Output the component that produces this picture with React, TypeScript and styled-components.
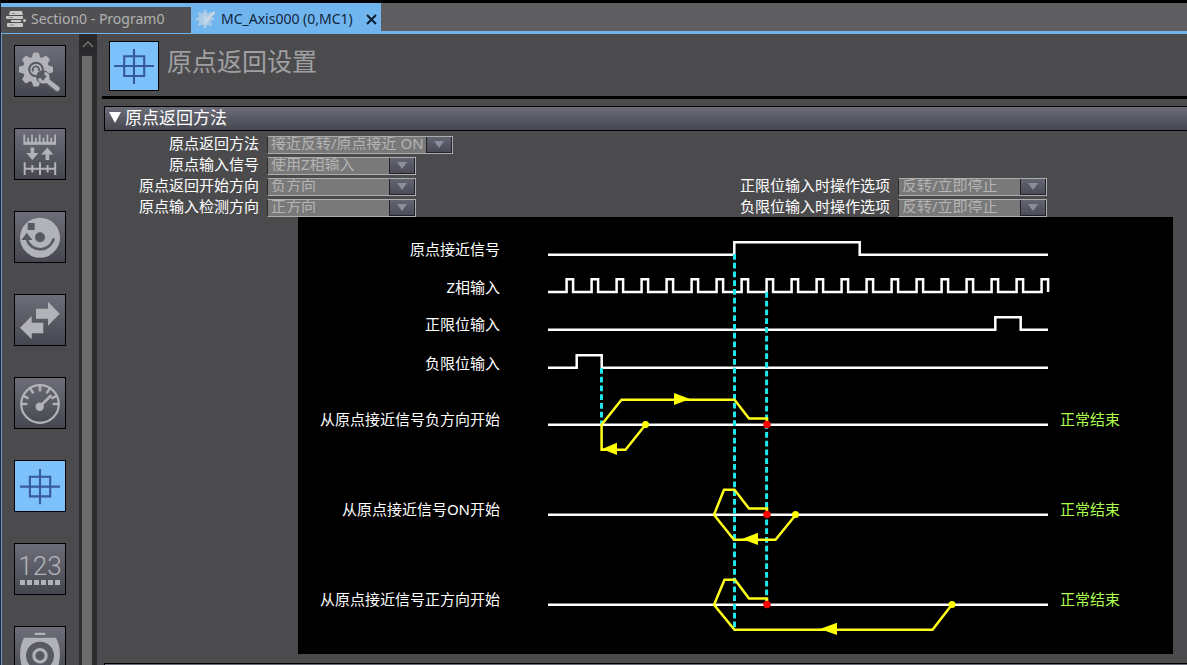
import React from "react";
import styled, { createGlobalStyle, css } from "styled-components";

const UI_FONT = `"Noto Sans", "Noto Sans CJK SC", sans-serif`;

const GlobalStyle = createGlobalStyle`
  * { box-sizing: border-box; }
  html, body { margin: 0; padding: 0; }
  body { background: #4b4b4e; font-family: ${UI_FONT}; font-size: 15px; color: #fff; }
`;

const Window = styled.div`
  display: flex;
  flex-direction: column;
  height: 100vh;
  overflow: hidden;
  border-top: 3px solid #000;
  border-left: 1px solid #1c2430;
  background: #4b4b4e;
`;

const TabBar = styled.nav`
  display: flex;
  flex: none;
  height: 31px;
  background: #5e5e60;
  border-bottom: 3px solid #71b5ef;
`;

const Tab = styled.div<{ $active?: boolean }>`
  display: flex;
  align-items: center;
  flex: none;
  width: 190px;
  height: 31px;
  padding-left: 4px;
  background: #505053;
  border-top: 4px solid #71b5ef;
  border-bottom: 1px solid #71b5ef;
  ${(p) =>
    p.$active &&
    css`
      background: #71b5ef;
    `}
`;

const tabButton = css`
  border: 0;
  padding: 0;
  background: none;
  font-family: ${UI_FONT};
  cursor: pointer;
`;

const TabButton = styled.button<{ $active?: boolean }>`
  ${tabButton}
  display: flex;
  align-items: center;
  gap: 4px;
  margin-bottom: 3px;
  font-size: 14px;
  line-height: 20px;
  white-space: nowrap;
  color: ${(p) => (p.$active ? "#10263c" : "#b0b0b1")};
`;

const CloseButton = styled.button`
  ${tabButton}
  display: flex;
  margin-left: auto;
  margin-right: 4px;
  margin-bottom: 2px;
`;

const Workspace = styled.div`
  display: flex;
  flex: 1;
  min-height: 0;
  border-left: 1px solid #6d9cc9;
`;

const Sidebar = styled.aside`
  display: flex;
  flex-direction: column;
  flex: none;
  gap: 31px;
  width: 77px;
  padding: 11px 0 0 12px;
  overflow: hidden;
`;

const IconButton = styled.button<{ $selected?: boolean }>`
  display: block;
  flex: none;
  width: 52px;
  height: 52px;
  padding: 0;
  border: 1px solid #000;
  background: ${(p) => (p.$selected ? "#7cc1fc" : "linear-gradient(#6d6e79, #45464f)")};
  cursor: pointer;
`;

const ScrollTrack = styled.div`
  display: flex;
  flex-direction: column;
  align-items: stretch;
  flex: none;
  width: 18px;
  padding-top: 1px;
  background: #2c2c2e;
`;

const ScrollUp = styled.button`
  display: flex;
  align-items: center;
  justify-content: center;
  height: 18px;
  padding: 0;
  border: 0;
  background: #29292b;
`;

const ScrollThumb = styled.div`
  flex: 1;
  margin: 3px 5px 0 3px;
  background: #6c6c6d;
`;

const Main = styled.main`
  flex: 1;
  min-width: 0;
  padding-left: 5px;
  overflow: hidden;
`;

const PageHeader = styled.header`
  display: flex;
  align-items: flex-start;
  gap: 8px;
  height: 65px;
  padding: 7px 0 0 7px;
  border-bottom: 3px solid #000;
`;

const PageIcon = styled.div`
  width: 50px;
  height: 50px;
  border: 1px solid #000;
  background: #7cc1fc;
`;

const PageTitle = styled.h1`
  margin: 0;
  font-size: 25px;
  line-height: 40px;
  font-weight: 400;
  color: #a0a0a2;
`;

const Section = styled.section`
  margin: 7px 0 0 2px;
`;

const SectionBar = styled.button`
  display: flex;
  align-items: center;
  gap: 4px;
  width: 100%;
  height: 25px;
  padding: 0 0 2px 4px;
  border: 1px solid #000;
  border-right: 0;
  background: linear-gradient(#6c6d78, #464750);
  font-family: ${UI_FONT};
  font-size: 17px;
  line-height: 20px;
  color: #fff;
  text-align: left;
`;

const Settings = styled.div`
  display: grid;
  grid-template-columns: 155px 460px 155px auto;
  column-gap: 8px;
  row-gap: 3px;
  padding: 5px 0 0;
`;

const FieldLabel = styled.label<{ $second?: boolean }>`
  grid-column: ${(p) => (p.$second ? 3 : 1)};
  height: 18px;
  line-height: 15px;
  text-align: right;
  white-space: nowrap;
`;

const SelectFrame = styled.div<{ $wide?: boolean; $second?: boolean }>`
  display: flex;
  grid-column: ${(p) => (p.$second ? 4 : 2)};
  position: relative;
  width: ${(p) => (p.$wide ? 186 : 149)}px;
  height: 18px;
  border: 1px solid #adadad;
  border-left: 1px solid #2a2a2a;
  background: #797979;
`;

const Select = styled.select`
  appearance: none;
  width: 100%;
  height: 16px;
  padding: 0 26px 3px 3px;
  border: 0;
  background: transparent;
  font-family: ${UI_FONT};
  font-size: 15px;
  line-height: 13px;
  color: #b4b4b4;
  opacity: 1;
`;

const SelectArrow = styled.span`
  display: flex;
  align-items: center;
  justify-content: center;
  position: absolute;
  top: 0;
  right: 0;
  width: 26px;
  height: 16px;
  border: 1px solid #22222a;
  border-top: 0;
  background: linear-gradient(#646572, #4b4c58);
  pointer-events: none;
`;

const Diagram = styled.figure`
  margin: 0 14px 0 194px;
  background: #000;

  svg {
    display: block;
    width: 100%;
    height: auto;
  }

  text {
    font-family: ${UI_FONT};
    font-size: 15px;
    fill: #fff;
  }

  text.result {
    fill: #adff4f;
  }
`;

const NextSection = styled(Section)`
  margin-top: 9px;
`;

const LIGHT = "#b2b3b8";
const DARK = "#585963";

const Icon = ({ children }: { children: React.ReactNode }) => (
  <svg width="50" height="50" viewBox="0 0 50 50" fill="none" aria-hidden="true" display="block">
    {children}
  </svg>
);

const teeth = [0, 45, 90, 135, 180, 225, 270, 315];

const GearWrenchIcon = () => (
  <Icon>
    <circle cx="21" cy="23.5" r="13" fill={LIGHT} />
    {teeth.map((a) => (
      <path
        key={a}
        d="M17 12.5 L18.6 7 H23.4 L25 12.5 Z"
        fill={LIGHT}
        stroke={LIGHT}
        strokeLinejoin="round"
        transform={`rotate(${a} 21 23.5)`}
      />
    ))}
    <circle cx="21" cy="23.5" r="6.8" stroke={DARK} strokeWidth="2" />
    <path d="M18.2 25.4 A3.2 3.2 0 1 1 23.6 25.2" stroke={DARK} strokeWidth="1.6" />
    <path d="M28.5 31.5 L42 42.5" stroke={DARK} strokeWidth="8" strokeLinecap="round" />
    <circle cx="28" cy="31" r="6.8" fill={DARK} />
    <path d="M31.5 34 L42.3 42.6" stroke={LIGHT} strokeWidth="4.6" strokeLinecap="round" />
    <path d="M29.6 27.2 A4.4 4.4 0 1 1 24.4 32.4" stroke={LIGHT} strokeWidth="3" />
    <path d="M29 33.500 L32 30.500 L35 35 L32.500 37 Z" fill={LIGHT} />
  </Icon>
);

const RulerIcon = () => (
  <Icon>
    <rect x="8.4" y="12.8" width="32.6" height="3" fill={LIGHT} />
    {[0, 1, 2, 3, 4, 5, 6, 7, 8].map((i) => (
      <rect key={i} x={8.4 + i * 3.85} y={i % 2 ? 8.6 : 5.6} width="1.8" height={i % 2 ? 5 : 8} fill={LIGHT} />
    ))}
    <path d="M15.6 18.5 H19.2 V24 H23.4 L17.4 31 L11.2 24 H15.6 Z" fill={LIGHT} />
    <path d="M30.6 31 H34.2 V25.5 H38.4 L32.4 18.5 L26.2 25.5 H30.6 Z" fill={LIGHT} />
    <path d="M9 39.7 H41 M9.7 33.2 V46 M25 33.2 V46 M40.2 33.2 V46 M17.3 36 V43.4 M32.6 36 V43.4" stroke={LIGHT} strokeWidth="2" />
  </Icon>
);

const RotaryIcon = () => (
  <Icon>
    <circle cx="25" cy="25.7" r="20" fill={LIGHT} />
    <circle cx="25" cy="25.3" r="5" fill={DARK} />
    <rect x="12.7" y="11" width="7" height="7" fill={DARK} />
    <path d="M38.8 26.5 A14 14 0 0 1 12 28" stroke={DARK} strokeWidth="2.6" />
    <path d="M6.4 28 L11.7 20.7 L17.4 28 Z" fill={DARK} />
  </Icon>
);

const TransferIcon = () => (
  <Icon>
    <path d="M21 13.7 H33 V6.7 L44.7 18.7 L33 30.7 V23.7 H21 Z" fill={LIGHT} />
    <path d="M28.3 27.7 V38.3 H16.7 V44.3 L5 32.7 L16.7 21 V27.7 Z" fill={LIGHT} />
  </Icon>
);

const GaugeIcon = () => (
  <Icon>
    <circle cx="25" cy="26" r="18.8" stroke={LIGHT} strokeWidth="2.2" />
    {[-90, -64, -32, 0, 32, 64, 90].map((a) => (
      <path key={a} d="M25 8 V13.4" stroke={LIGHT} strokeWidth="2.4" transform={`rotate(${a} 25 26)`} />
    ))}
    <circle cx="24.7" cy="28.7" r="4.2" fill={LIGHT} />
    <path d="M24.7 28.7 L35.5 18" stroke={LIGHT} strokeWidth="2.6" strokeLinecap="round" />
  </Icon>
);

const HomingIcon = () => (
  <Icon>
    <path d="M14.9 15.7 H35.2 V35.4 H14.9 Z M25 8 V43.3 M5 25.6 H45" stroke="#365a9d" strokeWidth="2.1" />
  </Icon>
);

const CounterText = styled.text`
  font-family: Roboto, "Liberation Sans", sans-serif;
  font-size: 26px;
  font-weight: 300;
  fill: ${LIGHT};
`;

const CounterIcon = () => (
  <Icon>
    <CounterText x="25" y="31" textAnchor="middle">
      123
    </CounterText>
    {[0, 1, 2, 3, 4, 5].map((i) => (
      <rect key={i} x={5 + i * 7} y="36" width="5" height="5" fill={LIGHT} />
    ))}
  </Icon>
);

const MotorIcon = () => (
  <Icon>
    <rect x="19.7" y="5.8" width="10.6" height="2.2" fill={LIGHT} />
    <path d="M9 10.7 H41 C46 20 46.500 32 41 46 H9 C3.500 32 4 20 9 10.700 Z" fill={LIGHT} />
    <circle cx="25" cy="28.700" r="14" fill={DARK} />
    <circle cx="25" cy="28.700" r="6.200" stroke={LIGHT} strokeWidth="3" />
  </Icon>
);

const ProgramIcon = () => (
  <svg width="22" height="20" viewBox="0 0 22 20" aria-hidden="true">
    <g fill="#c8c8c8">
      <path d="M5 2 H17 L18 6 H4 Z" />
      <rect x="1" y="7" width="17" height="3" rx="1" />
      <rect x="6" y="11" width="10" height="2" />
      <rect x="2" y="14" width="16" height="4" rx="1" />
      <circle cx="19.500" cy="11.500" r="1.500" />
    </g>
    <path d="M7 4.500 H10 M4 8.500 H8 M5 16 H9" stroke="#8b8b8d" />
  </svg>
);

const AxisIcon = () => (
  <svg width="22" height="20" viewBox="0 0 22 20" aria-hidden="true">
    <g fill="#a9cbe6">
      <circle cx="10" cy="10" r="6.500" />
      {teeth.map((a) => (
        <path key={a} d="M8.400 4 L8.900 1 H11.100 L11.600 4 Z" transform={`rotate(${a} 10 10)`} />
      ))}
    </g>
    <circle cx="10" cy="9" r="2.400" fill="#b8d3e8" />
    <path d="M9 14 L19.500 3" stroke="#c9d8e2" strokeWidth="2.600" fill="none" />
  </svg>
);

const tools = [
  { name: "单位设置", icon: <GearWrenchIcon /> },
  { name: "单位换算", icon: <RulerIcon /> },
  { name: "运行设置", icon: <RotaryIcon /> },
  { name: "其他操作", icon: <TransferIcon /> },
  { name: "速度设置", icon: <GaugeIcon /> },
  { name: "原点返回设置", icon: <HomingIcon />, selected: true },
  { name: "位置计数", icon: <CounterIcon /> },
  { name: "伺服设置", icon: <MotorIcon /> },
];

type FieldProps = { id: string; label: string; value: string; wide?: boolean; second?: boolean };

const Field = ({ id, label, value, wide, second }: FieldProps) => (
  <>
    <FieldLabel htmlFor={id} $second={second}>
      {label}
    </FieldLabel>
    <SelectFrame $wide={wide} $second={second}>
      <Select id={id} disabled defaultValue={value}>
        <option>{value}</option>
      </Select>
      <SelectArrow>
        <svg width="10" height="7" viewBox="0 0 10 7" aria-hidden="true">
          <path d="M0 0 H10 L5 7 Z" fill="#8d8e9b" />
        </svg>
      </SelectArrow>
    </SelectFrame>
  </>
);

const zPulses = Array.from({ length: 20 }, (_, i) => {
  const x = 268.6 + i * 25;
  return `H${x} V62.2 H${x + 6.5} V74.9`;
}).join(" ");

const signalLabels: [string, number][] = [
  ["原点接近信号", 38],
  ["Z相输入", 76],
  ["正限位输入", 113],
  ["负限位输入", 152],
  ["从原点接近信号负方向开始", 208],
  ["从原点接近信号ON开始", 298],
  ["从原点接近信号正方向开始", 388],
];

const HomingDiagram = () => (
  <svg viewBox="0 0 875 437" role="img" aria-label="原点返回时序图">
    {signalLabels.map(([label, y]) => (
      <text key={label} x="202" y={y} textAnchor="end">
        {label}
      </text>
    ))}
    {[208, 298, 388].map((y) => (
      <text key={y} className="result" x="762" y={y}>
        正常结束
      </text>
    ))}
    <g fill="none" stroke="#fff" strokeWidth="2.5">
      <path d="M250 37.7 H436.300 V25.200 H561.700 V37.700 H750" />
      <path d={`M250 74.9 ${zPulses}`} />
      <path d="M250 112.700 H697.300 V100.200 H722.700 V112.700 H750" />
      <path d="M250 150.700 H278.700 V138.200 H303.700 V150.700 H750" />
      <path d="M250 207.700 H750 M250 297.700 H750 M250 387.700 H750" />
    </g>
    <g stroke="#22e6ee" strokeWidth="3" strokeDasharray="5.800 2.950">
      <path d="M436.500 37 V411" />
      <path d="M468.600 75 V387" />
      <path d="M303.500 151 V207" />
    </g>
    <g fill="none" stroke="#ffff1a" strokeWidth="2.500">
      <path d="M347.500 207.700 L327.500 232.700 H303.600 V207.700 L323.500 182.700 H436.500 L451 201.500 H469 V207" />
      <path d="M498 297.500 L477.500 322.700 H436 L416 297.700 L426 272.700 H436.500 L451 291.500 H469 V297" />
      <path d="M654 387.500 L634.500 412.700 H436.500 L416 387.700 L426.500 362.700 H437 L451 381.500 H469 V387" />
    </g>
    <g fill="#ffff00">
      <path d="M376 176 V188 L392 182 Z" />
      <path d="M319 225.700 V238 L304 232 Z" />
      <path d="M460 315.700 V328 L444 322 Z" />
      <path d="M539 405.700 V418 L522 412 Z" />
      <circle cx="347.500" cy="207.500" r="3.500" />
      <circle cx="497.500" cy="297.500" r="3.500" />
      <circle cx="654" cy="387.500" r="3.500" />
    </g>
    <g fill="#f00">
      <circle cx="469" cy="207.500" r="3.700" />
      <circle cx="469" cy="297.500" r="3.700" />
      <circle cx="469" cy="387.500" r="3.700" />
    </g>
  </svg>
);

export default function App() {
  return (
    <>
      <GlobalStyle />
      <Window>
        <TabBar>
          <Tab>
            <TabButton>
              <ProgramIcon />
              Section0 - Program0
            </TabButton>
          </Tab>
          <Tab $active>
            <TabButton $active>
              <AxisIcon />
              MC_Axis000 (0,MC1)
            </TabButton>
            <CloseButton aria-label="关闭">
              <svg width="11" height="11" viewBox="0 0 11 11" aria-hidden="true">
                <path d="M1 1 L10 10 M10 1 L1 10" stroke="#0c1c2c" strokeWidth="2" />
              </svg>
            </CloseButton>
          </Tab>
        </TabBar>
        <Workspace>
          <Sidebar>
            {tools.map((tool) => (
              <IconButton key={tool.name} aria-label={tool.name} $selected={tool.selected}>
                {tool.icon}
              </IconButton>
            ))}
          </Sidebar>
          <ScrollTrack>
            <ScrollUp aria-label="向上滚动">
              <svg width="12" height="7" viewBox="0 0 12 7" fill="none" aria-hidden="true">
                <path d="M1 6 L6 1 L11 6" stroke="#6f6f71" strokeWidth="1.500" />
              </svg>
            </ScrollUp>
            <ScrollThumb />
          </ScrollTrack>
          <Main>
            <PageHeader>
              <PageIcon>
                <svg width="48" height="48" viewBox="1 1 48 48" fill="none" aria-hidden="true" display="block">
                  <path
                    d="M15.200 15.200 H35.200 V35 H15.200 Z M25 8 V43 M5 25 H45"
                    stroke="#365a9d"
                    strokeWidth="2.100"
                  />
                </svg>
              </PageIcon>
              <PageTitle>原点返回设置</PageTitle>
            </PageHeader>
            <Section>
              <SectionBar aria-expanded="true">
                <svg width="12" height="11" viewBox="0 0 12 11" aria-hidden="true">
                  <path d="M0 0 H12 L6 11 Z" fill="#fff" />
                </svg>
                原点返回方法
              </SectionBar>
              <Settings>
                <Field id="method" label="原点返回方法" value="接近反转/原点接近 ON" wide />
                <Field id="signal" label="原点输入信号" value="使用Z相输入" />
                <Field id="start" label="原点返回开始方向" value="负方向" />
                <Field id="positive" label="正限位输入时操作选项" value="反转/立即停止" second />
                <Field id="detect" label="原点输入检测方向" value="正方向" />
                <Field id="negative" label="负限位输入时操作选项" value="反转/立即停止" second />
              </Settings>
              <Diagram>
                <HomingDiagram />
              </Diagram>
            </Section>
            <NextSection>
              <SectionBar aria-label="原点返回参数" />
            </NextSection>
          </Main>
        </Workspace>
      </Window>
    </>
  );
}
